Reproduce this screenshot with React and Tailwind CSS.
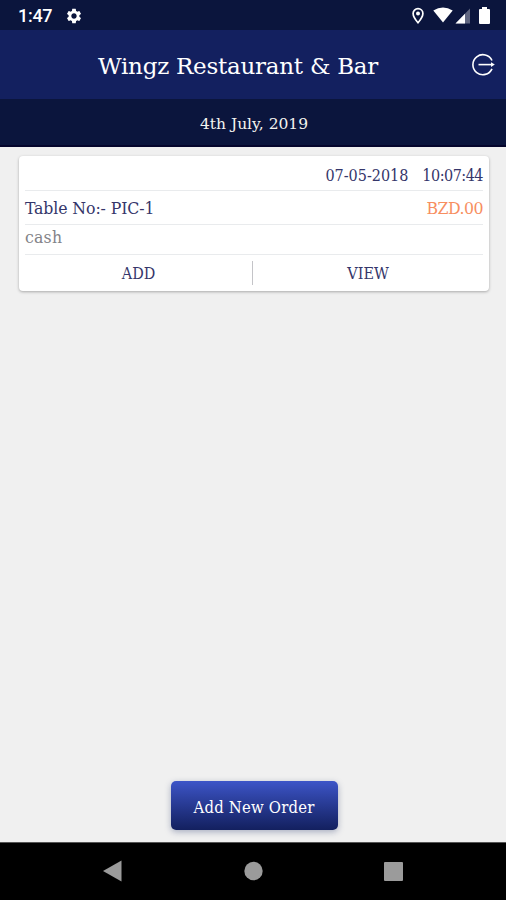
import { MdSettings } from "react-icons/md";

function StatusBar() {
    return (
        <div className="h-[30px] shrink-0 bg-[#0b153d] flex items-center justify-between pl-[18px] pr-[15px] pt-0.5 text-white">
            <div className="flex items-center gap-[13px]">
                <span className="font-['Roboto',sans-serif] font-medium text-[18px] leading-none tracking-[-0.3px]">1:47</span>
                <MdSettings className="w-[18px] h-[18px]" />
            </div>
            <svg width="79" height="18" viewBox="0 0 79 18" fill="currentColor">
                {/* Location */}
                <path d="M6 1.6a4.9 4.9 0 0 0-4.9 4.9C1.1 10 6 15.8 6 15.8s4.9-5.8 4.9-9.3A4.9 4.9 0 0 0 6 1.6Z" fill="none" stroke="currentColor" strokeWidth="1.7" />
                <circle cx="6" cy="6.6" r="2" />
                {/* Wifi */}
                <path d="M21.3 3.4Q31 -2.2 40.7 3.4L31 15.4Z" />
                {/* Signal */}
                <path d="M43.5 16.5 58 1.5v15Z" opacity="0.35" />
                <path d="M43.5 16.5 53 6.7v9.8Z" />
                {/* Battery */}
                <path d="M70 0h5v2h2q1 0 1 1v13q0 1-1 1h-9q-1 0-1-1V3q0-1 1-1h2Z" />
            </svg>
        </div>
    );
}

function Header({ title }) {
    return (
        <header className="h-[69px] shrink-0 bg-[#13205f] flex items-center justify-between pl-[98px] pr-[11px] text-white">
            <h1 className="whitespace-nowrap pt-[3px] font-['DejaVu_Serif',serif] text-[23px] leading-none tracking-[-0.25px]">
                {title}
            </h1>
            <button>
                <svg width="24" height="24" viewBox="0 0 24 24" fill="none" stroke="currentColor" strokeWidth="1.6">
                    <path d="M21 7.5A10 10 0 1 0 21 15.8" />
                    <path d="M7.5 11.6H21" />
                    <path d="M20 9.2 23.8 11.6 20 14Z" fill="currentColor" stroke="none" />
                </svg>
            </button>
        </header>
    );
}

function OrderCard({ order }) {
    return (
        <div className="ml-[19px] mr-[17px] mt-[9px] h-[135px] bg-white rounded-[4px] px-[6px] shadow-[0_1px_3px_rgba(0,0,0,0.3)] text-[#35366a]">
            <div className="h-[35px] pt-[6px] flex items-center justify-end gap-[14px] border-b border-[#e9ebed] text-[16px] leading-none whitespace-nowrap">
                <span>{order.date}</span>
                <span className="tracking-[-0.5px]">{order.time}</span>
            </div>
            <div className="h-[34px] pt-[3px] flex items-center justify-between border-b border-[#e9ebed] text-[17.5px] leading-none whitespace-nowrap">
                <span className="tracking-[-0.1px]">Table No:- {order.table}</span>
                <span className="text-[#f78e60] tracking-[-0.5px]">{order.amount}</span>
            </div>
            <div className="h-[30px] pb-1 flex items-center border-b border-[#e9ebed] text-[#838388] text-[17.5px] tracking-[0.2px] leading-none">
                {order.payment}
            </div>
            <div className="h-9 flex items-center text-[16px] leading-none">
                <button className="w-[227px] pt-0.5">ADD</button>
                <div className="w-px h-6 bg-[#c4c4c8]" />
                <button className="flex-1 pt-0.5">VIEW</button>
            </div>
        </div>
    );
}

function NavBar() {
    return (
        <div className="h-[58px] shrink-0 bg-black border-t border-[#555] flex justify-center">
            <svg width="300" height="57" viewBox="103 843 300 57" fill="#9b9b9b">
                <path d="M103 871 121.5 860.5v21Z" />
                <circle cx="253.5" cy="871" r="9.2" />
                <rect x="384" y="862" width="19" height="19" rx="1" />
            </svg>
        </div>
    );
}

const order = {
    date: "07-05-2018",
    time: "10:07:44",
    table: "PIC-1",
    amount: "BZD.00",
    payment: "cash",
};

export default function App() {
    return (
        <div className="w-[506px] h-[900px] flex flex-col overflow-hidden bg-[#f0f0f0] font-['DejaVu_Serif_Condensed','DejaVu_Serif',serif]">
            <StatusBar />
            <Header title="Wingz Restaurant & Bar" />
            <div className="h-12 shrink-0 bg-[#0b153d] border-b-2 border-[#05052c] flex items-center justify-center pt-1.5 pl-0.5 text-[#f4f4ef] font-['DejaVu_Serif',serif] text-[15.5px] leading-none">
                <span>4th July, 2019</span>
            </div>
            <main className="flex-1">
                <OrderCard order={order} />
            </main>
            <div className="flex justify-center pb-3 pl-[2px]">
                <button className="w-[167px] h-[49px] rounded-[5px] bg-linear-to-b from-[#3d55c8] to-[#13205f] shadow-[0_2px_6px_rgba(60,75,120,0.4)] pt-[6px] text-white text-[16.5px] leading-none tracking-[0.2px]">
                    Add New Order
                </button>
            </div>
            <NavBar />
        </div>
    );
}
